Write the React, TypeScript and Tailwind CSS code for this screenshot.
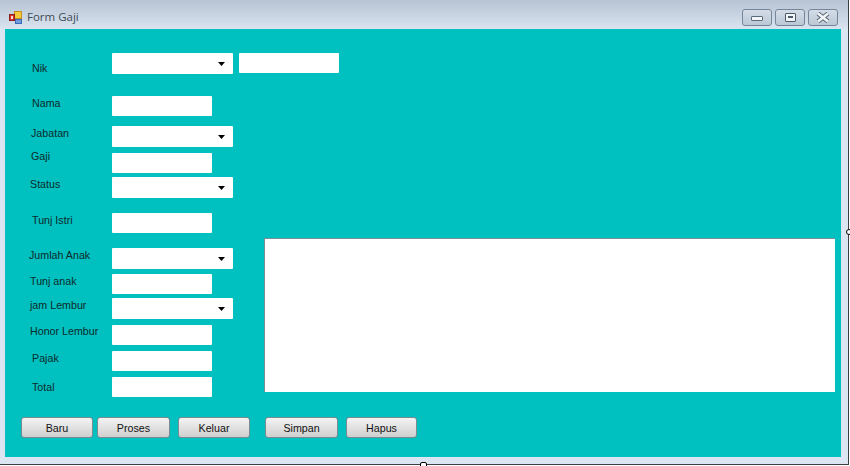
const sans = 'font-["Liberation_Sans",Arial,sans-serif]'

// baris form: label kiri + input / combo
const rows = [
  { label: 'Nik', pad: 'pl-[27px]', top: 'pt-[8px]', gap: 'mt-0', kind: 'combo' },
  { label: 'Nama', pad: 'pl-[27px]', top: 'pt-[0px]', gap: 'mt-[22px]', kind: 'text' },
  { label: 'Jabatan', pad: 'pl-[26px]', top: 'pt-[0px]', gap: 'mt-[10px]', kind: 'combo' },
  { label: 'Gaji', pad: 'pl-[26px]', top: '-mt-[4px]', gap: 'mt-[6px]', kind: 'text' },
  { label: 'Status', pad: 'pl-[25px]', top: 'pt-[0px]', gap: 'mt-[4px]', kind: 'combo' },
  { label: 'Tunj Istri', pad: 'pl-[27px]', top: 'pt-[0px]', gap: 'mt-[15px]', kind: 'text' },
  { label: 'Jumlah Anak', pad: 'pl-[24px]', top: 'pt-[0px]', gap: 'mt-[15px]', kind: 'combo' },
  { label: 'Tunj anak', pad: 'pl-[25px]', top: 'pt-[0px]', gap: 'mt-[5px]', kind: 'text' },
  { label: 'jam Lembur', pad: 'pl-[25px]', top: 'pt-[0px]', gap: 'mt-[4px]', kind: 'combo' },
  { label: 'Honor Lembur', pad: 'pl-[25px]', top: '-mt-[1px]', gap: 'mt-[6px]', kind: 'text' },
  { label: 'Pajak', pad: 'pl-[27px]', top: 'pt-[0px]', gap: 'mt-[6px]', kind: 'text' },
  { label: 'Total', pad: 'pl-[27px]', top: 'pt-[3px]', gap: 'mt-[6px]', kind: 'text' },
]

const buttons = [
  { label: 'Baru', size: 'w-[72px]', gap: 'ml-0' },
  { label: 'Proses', size: 'w-[73px]', gap: 'ml-[4px]' },
  { label: 'Keluar', size: 'w-[72px]', gap: 'ml-[8px]' },
  { label: 'Simpan', size: 'w-[73px]', gap: 'ml-[15px]' },
  { label: 'Hapus', size: 'w-[71px]', gap: 'ml-[8px]' },
]

function Combo() {
  return (
    <div className="flex h-[21px] w-[121px] items-center justify-end rounded-[1px] bg-white pr-[8px]">
      <svg width="7" height="4" viewBox="0 0 7 4">
        <path d="M0 0h7L3.5 4z" fill="#000" />
      </svg>
    </div>
  )
}

function TextBox({ width = 'w-[100px]' }: { width?: string }) {
  return <div className={`h-[20px] ${width} rounded-[1px] bg-white`} />
}

function WinButton({ children, gap }: { children: React.ReactNode; gap: string }) {
  return (
    <div className={`${gap} flex h-[17px] w-[30px] items-center justify-center rounded-[3px] border border-[#76869a] bg-gradient-to-b from-[#d3dce7] to-[#bcc8d6]`}>
      {children}
    </div>
  )
}

export default function App() {
  return (
    <div className={`relative h-[466px] w-[850px] overflow-hidden bg-white ${sans}`}>
      <div className="h-[465px] w-[849px] border-r border-b border-[#3a3f45] bg-[#dce6f2]">
        {/* title bar */}
        <div className="flex h-[29px] items-center bg-gradient-to-b from-[#b7c3d3] to-[#dae4f0] pl-[9px] pr-[10px] pt-[5px]">
          <svg width="13" height="13" viewBox="0 0 13 13">
            <rect x="5.5" y="0.5" width="7" height="7" fill="#f5c93c" stroke="#c98f1e" />
            <rect x="0.5" y="3.5" width="5" height="6" fill="#d8352a" stroke="#8e1f1a" />
            <rect x="2" y="5" width="2" height="3" fill="#f6d8d0" />
            <rect x="6.5" y="8.5" width="6" height="4" fill="#6f9be0" stroke="#3d69b3" />
          </svg>
          <span className="ml-[5px] font-['Open_Sans',sans-serif] text-[11.5px] text-[#3f4b57]">Form Gaji</span>
          <div className="ml-auto flex">
            <WinButton gap="ml-0">
              <div className="mt-[3px] h-[5px] w-[12px] rounded-[1px] border border-[#5c6a7a] bg-[#f2f5f8]" />
            </WinButton>
            <WinButton gap="ml-[3px]">
              <div className="flex h-[9px] w-[11px] items-center justify-center rounded-[1px] border border-[#4d5a6a] bg-[#f2f5f8]">
                <div className="h-[2px] w-[5px] bg-[#4d5a6a]" />
              </div>
            </WinButton>
            <WinButton gap="ml-[3px]">
              <svg width="16" height="11" viewBox="0 0 16 11">
                <path d="M3 1.5l10 8M13 1.5L3 9.5" stroke="#5a6572" strokeWidth="4.5" />
                <path d="M3 1.5l10 8M13 1.5L3 9.5" stroke="#f2f5f8" strokeWidth="2.6" />
              </svg>
            </WinButton>
          </div>
        </div>

        {/* form body */}
        <div className="ml-[5px] h-[428px] w-[836px] bg-[#00c0c0] pt-[24px] text-[10.7px] text-[#0d2b2b]">
          <div className="flex">
            <div className="w-[234px]">
              {rows.map((row) => (
                <div key={row.label} className={`flex ${row.gap}`}>
                  <div className={`h-[14px] w-[107px] leading-[14px] ${row.pad} ${row.top}`}>{row.label}</div>
                  {row.kind === 'combo' ? <Combo /> : <TextBox />}
                </div>
              ))}
            </div>
            <div className="flex flex-1 flex-col">
              <TextBox />
              <div className="ml-[25px] mt-[165px] h-[154px] w-[571px] border-t border-l border-[#7d8f96] bg-white" />
            </div>
          </div>
          <div className="mt-[20px] flex pl-[16px]">
            {buttons.map((b) => (
              <div
                key={b.label}
                className={`${b.gap} ${b.size} flex h-[21px] items-center justify-center rounded-[3px] border border-[#7b8a8f] bg-gradient-to-b from-[#f4f4f4] to-[#cfcfcf] pt-[1px] text-[10.7px] text-[#111]`}
              >
                {b.label}
              </div>
            ))}
          </div>
        </div>
      </div>

      {/* resize handles */}
      <div className="absolute left-[846px] top-[229px] h-[6px] w-[6px] rounded-full border border-black bg-white" />
      <div className="absolute left-[420px] top-[462px] h-[6px] w-[7px] rounded-[2px] border border-black bg-white" />
    </div>
  )
}
